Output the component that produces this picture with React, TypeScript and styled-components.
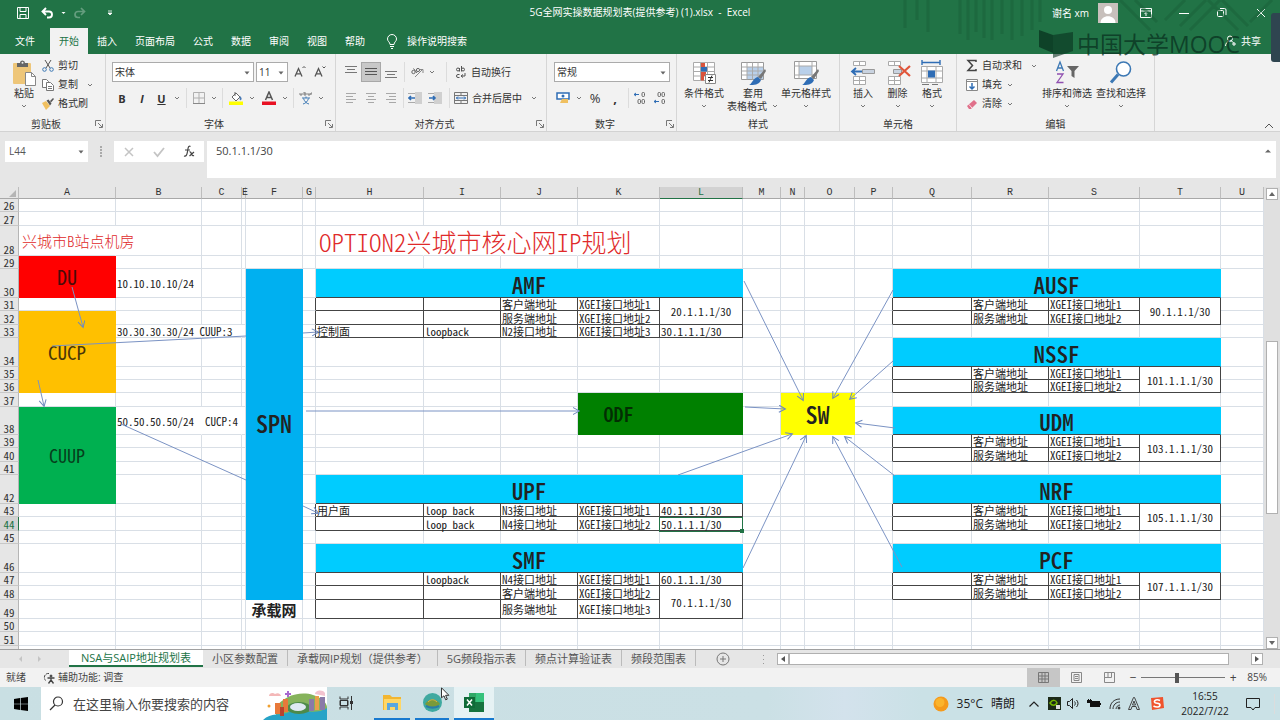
import React from "react";
import styled, { createGlobalStyle, css } from "styled-components";

const GREEN = "#217346";
const UI_FONT = '"Open Sans", "Noto Sans CJK SC", sans-serif';
const CELL_FONT = '"Noto Sans CJK SC", sans-serif';

const Global = createGlobalStyle`
  * { box-sizing: border-box; }
  body { margin: 0; font-family: ${UI_FONT}; font-size: 10px; line-height: 13px; color: #333; }
  button, input, select { font: inherit; color: inherit; margin: 0; padding: 0; border: 0; background: none; border-radius: 0; }
  svg { display: block; flex: none; }
`;

const Shell = styled.div`
  display: flex;
  flex-direction: column;
  height: 100vh;
  min-width: 1180px;
  overflow: hidden;
  position: relative;
`;

/* ---------- title bar and tabs ---------- */

const TitleBar = styled.header`
  display: grid;
  grid-template-columns: 1fr auto 1fr;
  align-items: start;
  height: 28px;
  flex: none;
  background: ${GREEN};
  color: #fff;
  position: relative;
`;
const Side = styled.div<{ $end?: boolean }>`
  display: flex;
  align-items: center;
  height: 26px;
  justify-content: ${(p) => (p.$end ? "flex-end" : "flex-start")};
  padding-left: ${(p) => (p.$end ? 0 : 12)}px;
`;
const DocTitle = styled.h1`
  margin: 0;
  font-size: 10px;
  font-weight: 400;
  line-height: 24px;
`;
const BarButton = styled.button<{ $w: number; $dim?: boolean }>`
  display: flex;
  align-items: center;
  justify-content: center;
  width: ${(p) => p.$w}px;
  height: 24px;
  opacity: ${(p) => (p.$dim ? 0.3 : 1)};
`;
const Account = styled.button`
  display: flex;
  align-items: center;
  gap: 9px;
  margin-right: 9px;
`;
const Stripes = styled.svg`
  position: absolute;
  right: 0;
  top: 0;
`;
const TabBar = styled.nav`
  display: flex;
  height: 26px;
  flex: none;
  background: ${GREEN};
  color: #fff;
`;
const Tab = styled.button<{ $on?: boolean; $first?: boolean }>`
  padding: 0 9px;
  min-width: ${(p) => (p.$first ? 50 : 38)}px;
  ${(p) => p.$on && css`background: #f2f2f2; color: ${GREEN};`}
`;
const Tell = styled.button`
  display: flex;
  align-items: center;
  gap: 9px;
  margin-left: 12px;
`;
const Share = styled.button`
  display: flex;
  align-items: center;
  gap: 4px;
  margin-left: auto;
  margin-right: 19px;
`;
const Watermark = styled.div`
  position: absolute;
  right: 40px;
  top: 30px;
  display: flex;
  align-items: center;
  gap: 2px;
  font-size: 23px;
  line-height: 28px;
  color: rgba(8, 48, 30, 0.74);
  pointer-events: none;
`;
const EdgeHandle = styled.div`
  position: absolute;
  right: 0;
  top: 13px;
  width: 9px;
  height: 49px;
  background: #2f4550;
  border-radius: 3px 0 0 3px;
`;

/* ---------- ribbon ---------- */

const Ribbon = styled.section`
  display: flex;
  height: 78px;
  flex: none;
  background: #f2f2f2;
  border-bottom: 1px solid #d2d2d2;
`;
const GroupBox = styled.div<{ $w: number }>`
  display: flex;
  flex-direction: column;
  width: ${(p) => p.$w}px;
  flex: none;
  border-right: 1px solid #d6d6d6;
`;
const GroupBody = styled.div<{ $pad: number }>`
  display: flex;
  flex: 1;
  padding-left: ${(p) => p.$pad}px;
`;
const GroupFoot = styled.div`
  display: flex;
  align-items: center;
  height: 14px;
  span { flex: 1; text-align: center; }
`;
const Launch = styled.button`
  width: 13px;
  height: 13px;
  display: grid;
  place-items: center;
`;
const BigButton = styled.button<{ $w: number }>`
  display: flex;
  flex-direction: column;
  align-items: center;
  width: ${(p) => p.$w}px;
  padding-top: 6px;
  white-space: nowrap;
  svg:first-child { margin-bottom: 1px; }
`;
const BigNote = styled.span`
  display: flex;
  align-items: center;
  gap: 4px;
  height: 12px;
`;
const Stack = styled.div<{ $w?: number }>`
  display: flex;
  flex-direction: column;
  padding-top: 2px;
  width: ${(p) => (p.$w ? p.$w + "px" : "auto")};
`;
const RowButton = styled.button<{ $h?: number; $far?: boolean }>`
  display: flex;
  align-items: center;
  height: ${(p) => p.$h || 19}px;
  gap: 4px;
  white-space: nowrap;
  svg + span + svg { margin-left: ${(p) => (p.$far ? 4 : 0)}px; }
`;
const Lines = styled.div`
  display: flex;
  flex-direction: column;
  gap: 6px;
  padding-top: 8px;
`;
const Line = styled.div<{ $gap?: number }>`
  display: flex;
  align-items: center;
  height: 20px;
  gap: ${(p) => p.$gap || 0}px;
`;
const Tool = styled.button<{ $w?: number; $on?: boolean; $dim?: boolean; $large?: boolean }>`
  display: grid;
  place-items: center;
  width: ${(p) => p.$w || 20}px;
  height: 20px;
  font-size: ${(p) => (p.$large ? 13 : 11)}px;
  opacity: ${(p) => (p.$dim ? 0.6 : 1)};
  ${(p) => p.$on && css`background: #c8c8c8; box-shadow: inset 0 0 0 1px #a8a8a8;`}
`;
const Sep = styled.i<{ $w: number }>`
  width: ${(p) => p.$w}px;
  height: 20px;
  display: grid;
  justify-content: center;
  &::before { content: ""; width: 1px; background: #dcdcdc; }
`;
const Pick = styled.label<{ $w: number }>`
  position: relative;
  width: ${(p) => p.$w}px;
  height: 20px;
  background: #fff;
  border: 1px solid #ababab;
  select { width: 100%; height: 18px; padding-left: 2px; appearance: none; outline: none; }
  svg { position: absolute; right: 2px; top: 7px; pointer-events: none; }
`;
const Collapse = styled.button`
  margin: auto 6px 2px auto;
`;

/* ---------- formula bar ---------- */

const FormulaBar = styled.div`
  display: flex;
  height: 55px;
  flex: none;
  padding: 9px 4px 9px 5px;
  background: #e6e6e6;
`;
const NameBox = styled.label`
  display: flex;
  align-items: center;
  width: 83px;
  height: 21px;
  padding: 0 4px;
  background: #fff;
  input { width: 68px; outline: none; color: #555; }
`;
const Grip = styled.span<{ $h: number }>`
  display: grid;
  place-items: center;
  width: 26px;
  height: ${(p) => p.$h}px;
`;
const FxBox = styled.div`
  display: flex;
  align-items: center;
  justify-content: space-around;
  width: 90px;
  height: 21px;
  background: #fff;
`;
const FormulaField = styled.div`
  display: flex;
  flex: 1;
  align-items: flex-start;
  margin-left: 3px;
  height: 37px;
  background: #fff;
  padding: 0 4px 0 9px;
  input { flex: 1; height: 19px; font-size: 11px; outline: none; color: #444; }
  button { height: 19px; }
`;

/* ---------- sheet ---------- */

const SheetArea = styled.main`
  display: flex;
  flex: 1;
  min-height: 0;
  background: #fff;
`;
const Viewport = styled.div`
  position: relative;
  flex: 1;
  overflow: hidden;
`;
const Grid = styled.table`
  table-layout: fixed;
  width: 100%;
  min-width: 1264px;
  border-collapse: separate;
  border-spacing: 0;
  font-family: ${CELL_FONT};
  font-feature-settings: "hwid";
  font-size: 11px;
  line-height: 12px;
  color: #222;
`;
const GridRow = styled.tr<{ $h: number }>`
  height: ${(p) => p.$h}px;
`;
const ColHead = styled.th<{ $on?: boolean }>`
  padding: 0;
  font-family: "Liberation Mono", monospace;
  font-size: 10px;
  font-weight: 400;
  line-height: 11px;
  background: ${(p) => (p.$on ? "#d2d2d2" : "#e6e6e6")};
  color: ${(p) => (p.$on ? GREEN : "#333")};
  border-right: 1px solid #bdbdbd;
  border-bottom: 1px solid ${(p) => (p.$on ? GREEN : "#a8a8a8")};
`;
const RowHead = styled.th<{ $on?: boolean }>`
  padding: 0;
  font-weight: 400;
  vertical-align: bottom;
  background: ${(p) => (p.$on ? "#d2d2d2" : "#e6e6e6")};
  color: ${(p) => (p.$on ? GREEN : "#333")};
  border-right: 1px solid ${(p) => (p.$on ? GREEN : "#b5b5b5")};
  border-bottom: 1px solid #c8c8c8;
`;
type CellStyle = {
  $bg?: string;
  $size?: number;
  $weight?: number;
  $center?: boolean;
  $color?: string;
  $right: string;
  $bottom: string;
  $valign?: string;
  $up?: boolean;
};
const Cell = styled.td<CellStyle>`
  padding: 0 1px ${(p) => (p.$up ? 22 : 0)}px ${(p) => (p.$size && !p.$center ? 3 : 1)}px;
  white-space: pre;
  vertical-align: ${(p) => p.$valign || "middle"};
  text-align: ${(p) => (p.$center ? "center" : "left")};
  background: ${(p) => p.$bg || "transparent"};
  color: ${(p) => p.$color || "inherit"};
  font-weight: ${(p) => p.$weight || 400};
  border-right: 1px solid ${(p) => p.$right};
  border-bottom: 1px solid ${(p) => p.$bottom};
  ${(p) => p.$size && css`font-size: ${p.$size}px; line-height: ${p.$size + 2}px;`}
`;
const Selected = styled.div`
  position: relative;
  &::before { content: ""; position: absolute; inset: -1px -2px -2px -2px; border: 1px solid ${GREEN}; }
  &::after { content: ""; position: absolute; right: -3px; bottom: -3px; width: 4px; height: 4px; background: ${GREEN}; }
`;
const Arrows = styled.svg`
  position: absolute;
  left: 0;
  top: 0;
  pointer-events: none;
`;
const VScroll = styled.div`
  display: flex;
  flex-direction: column;
  width: 16px;
  padding: 1px 2px 0;
  background: #e0e0e0;
`;
const ScrollButton = styled.button`
  display: grid;
  place-items: center;
  width: 12px;
  height: 12px;
  flex: none;
  background: #fff;
  border: 1px solid #b0b0b0;
`;
const VTrack = styled.div`
  display: grid;
  grid-template-rows: 141fr 173fr 123fr;
  flex: 1;
`;
const Thumb = styled.div`
  grid-row: 2;
  background: #fff;
  border: 1px solid #b0b0b0;
`;

const SheetTabs = styled.nav`
  display: flex;
  align-items: flex-start;
  height: 19px;
  flex: none;
  background: #e6e6e6;
  border-top: 1px solid #a0a0a0;
  font-size: 11px;
  color: #555;
`;
const TabNav = styled.div`
  display: flex;
  align-items: center;
  justify-content: center;
  gap: 14px;
  width: 69px;
  height: 18px;
  padding-right: 10px;
`;
const SheetTab = styled.button<{ $on?: boolean }>`
  height: 16px;
  padding: 0 9px;
  line-height: 15px;
  white-space: nowrap;
  border-right: 1px solid #bbb;
  ${(p) => p.$on && css`min-width: 134px; height: 17px; background: #fff; color: ${GREEN}; border-right: 0; border-bottom: 2px solid ${GREEN};`}
`;
const AddTab = styled.button`
  margin: 2px 0 0 20px;
`;
const HScroll = styled.div`
  display: flex;
  align-items: center;
  width: 40%;
  height: 18px;
  margin-left: auto;
  margin-right: 17px;
`;
const HThumb = styled.div`
  flex: 1;
  height: 12px;
  background: #fff;
  border: 1px solid #b0b0b0;
  margin-right: 22px;
`;

/* ---------- status bar ---------- */

const StatusBar = styled.footer`
  display: flex;
  align-items: center;
  height: 19px;
  flex: none;
  padding: 0 13px 0 6px;
  background: #f2f2f2;
  color: #444;
`;
const Access = styled.button`
  display: flex;
  align-items: center;
  gap: 2px;
  margin-left: 17px;
`;
const ViewTool = styled.button<{ $on?: boolean }>`
  display: grid;
  place-items: center;
  width: 33px;
  height: 19px;
  background: ${(p) => (p.$on ? "#c6c6c6" : "transparent")};
`;
const Zoom = styled.div`
  display: flex;
  align-items: center;
  gap: 3px;
  margin-left: 2px;
  button { width: 10px; font-size: 12px; }
  span { margin-left: 6px; }
`;
const ZoomSlider = styled.input`
  width: 84px;
  height: 12px;
  appearance: none;
  background: linear-gradient(#777, #777) center / 100% 1px no-repeat;
  &::-webkit-slider-thumb { appearance: none; width: 4px; height: 10px; background: #555; }
`;

/* ---------- task bar ---------- */

const TaskBar = styled.footer`
  display: flex;
  align-items: stretch;
  height: 33px;
  flex: none;
  background: linear-gradient(90deg, #c9dfe3, #cbe0e5 60%, #d3e2ec 66%, #cae1e6 72%);
  color: #222;
`;
const StartButton = styled.button`
  display: grid;
  place-items: center;
  width: 41px;
`;
const Search = styled.label`
  display: flex;
  align-items: center;
  width: 286px;
  background: #fff;
  padding-left: 8px;
  input { width: 196px; margin-left: 9px; margin-right: 8px; font-size: 13px; outline: none; }
  input::placeholder { color: #444; opacity: 1; }
`;
const TaskButton = styled.button<{ $w: number; $open?: boolean; $on?: boolean }>`
  display: grid;
  place-items: center;
  width: ${(p) => p.$w}px;
  margin-right: ${(p) => (p.$open ? 5 : 9)}px;
  background: ${(p) => (p.$on ? "#e6f2f4" : "transparent")};
  border-bottom: 2px solid ${(p) => (p.$open ? "#1779cf" : "transparent")};
`;
const Tray = styled.div`
  display: flex;
  align-items: center;
  margin-left: auto;
`;
const Weather = styled.button`
  display: flex;
  align-items: center;
  gap: 8px;
  font-size: 12px;
  margin-right: 9px;
`;
const TrayButton = styled.button<{ $w?: number }>`
  display: grid;
  place-items: center;
  width: ${(p) => p.$w || 20}px;
  height: 30px;
`;
const Clock = styled.button`
  width: 64px;
  margin-left: 2px;
  line-height: 15px;
`;
const Pointer = styled.svg`
  position: absolute;
  left: 441px;
  bottom: 19px;
`;

/* ---------- icons ---------- */

const Caret = () => (
  <svg width="8" height="6" viewBox="0 0 8 6"><path d="M2 2l2 2 2-2" fill="none" stroke="#777" /></svg>
);
const CaretFill = () => (
  <svg width="8" height="6" viewBox="0 0 8 6"><path d="M1.500 1.500h5L4 4.500z" fill="#666" /></svg>
);
const IconLaunch = () => (
  <svg width="8" height="8" viewBox="0 0 8 8" fill="none" stroke="#777"><path d="M.5 6V.5H6M3 3l4 4M7.500 4v3.500H4" /></svg>
);
const IconPaste = () => (
  <svg width="26" height="26" viewBox="0 0 26 26">
    <rect x="2" y="3" width="18" height="21" rx="1" fill="#eec679" />
    <path d="M6 7V3h3a2.500 2.500 0 0 1 5 0h3v4z" fill="#666" /><circle cx="11.500" cy="2.800" r="1" fill="#f2f2f2" />
    <path d="M14.500 12.500h6l4 4v9h-10z" fill="#fff" stroke="#888" /><path d="M20.500 12.500v4h4" fill="none" stroke="#888" />
  </svg>
);
const IconCut = () => (
  <svg width="12" height="12" viewBox="0 0 12 12" fill="none"><path d="M3 0l5 8M9 0L4 8" stroke="#555" /><circle cx="2.500" cy="9.500" r="1.800" stroke="#3c78b4" /><circle cx="9.500" cy="9.500" r="1.800" stroke="#3c78b4" /></svg>
);
const IconCopy = () => (
  <svg width="12" height="12" viewBox="0 0 12 12" fill="#fff" stroke="#777"><path d="M.5.5h4l2 2v6h-6z" /><path d="M4.500 3.500h4l3 3v5h-7zM6 7.500h4M6 9.500h4" /></svg>
);
const IconBrush = () => (
  <svg width="12" height="12" viewBox="0 0 12 12"><path d="M0 5l4-2 4 5-4 4z" fill="#f0c060" /><path d="M4.500 2.500l2-1 3 4-1.500 2z" fill="#555" /><path d="M8 3l3-3 1 1-3 3.500z" fill="#555" /></svg>
);
const GrowA = ({ down }: { down?: boolean }) => (
  <svg width="14" height="14" viewBox="0 0 14 14" fill="none" stroke="#555" strokeWidth="1.300"><path d="M2 11.500L5.500 3.500 9 11.500M3.300 8.800h4.400" /><path d={down ? "M9.500 1.500L11 3l1.500-1.500" : "M9.500 3L11 1.500 12.500 3"} strokeWidth="1" /></svg>
);
const IconBorders = () => (
  <svg width="12" height="12" viewBox="0 0 12 12" stroke="#b0b0b0" fill="none"><path d="M.5.5h11v11H.5zM6 .5v11M.5 6h11" /><path d="M0 11.500h12" stroke="#888" /></svg>
);
const IconBucket = () => (
  <svg width="14" height="14" viewBox="0 0 14 14"><path d="M3 6l4-4 4 4-4 4zM6 1v4" fill="#fff" stroke="#666" /><path d="M11 5c2 2 2 3 1 4s-2-1-1-4z" fill="#4a7ab5" /><path d="M0 10.500h14V14H0z" fill="#ff0" /></svg>
);
const IconFontColor = () => (
  <svg width="14" height="14" viewBox="0 0 14 14"><path d="M3.500 9L7 1l3.500 8M4.800 6.500h4.400" fill="none" stroke="#555" strokeWidth="1.500" /><path d="M0 10.500h14V14H0z" fill="#e81123" /></svg>
);
const IconWen = () => (
  <svg width="14" height="14" viewBox="0 0 14 14" fill="none"><path d="M1 2v2h2V2M5 1v3h2V2H5M9 2v2h2V2M12 4V2h1" stroke="#666" strokeWidth=".8" /><path d="M3 7h8M7 5.500V7M4.500 7.500c1 3 3 5 5.500 5.500M9.500 7.500c-1 3-3 5-5.500 5.500" stroke="#3c78b4" /></svg>
);
const Bars = ({ rows, dark }: { rows: [number, number, number][]; dark?: boolean }) => (
  <svg width="14" height="14" viewBox="0 0 14 14" stroke={dark ? "#555" : "#777"}>
    {rows.map(([y, a, b]) => <path key={y} d={`M${a} ${y}.5H${b}`} />)}
  </svg>
);
const IconOrient = () => (
  <svg width="14" height="14" viewBox="0 0 14 14" fill="none" stroke="#666"><circle cx="3.500" cy="7" r="1.700" /><path d="M3.500 3.500L7 8" /><circle cx="8" cy="5" r="1.600" /><path d="M5 12l7-7M9.500 4.500H13V8" stroke="#888" /></svg>
);
const IconIndent = ({ flip }: { flip?: boolean }) => (
  <svg width="14" height="12" viewBox="0 0 14 12"><path d={flip ? "M6 0h8v12H6z" : "M7 0h7v12H7z"} fill="#d0d0d0" /><path d={flip ? "M0 1.500h6M0 10.500h6" : "M0 1.500h7M0 10.500h7"} stroke="#aaa" /><path d={flip ? "M1 6h6M5 4l2 2-2 2" : "M7 6H1M3 4L1 6l2 2"} fill="none" stroke="#2f6db5" strokeWidth="1.600" /></svg>
);
const IconWrap = () => (
  <svg width="12" height="14" viewBox="0 0 12 14" fill="none" stroke="#555"><circle cx="3" cy="4.500" r="1.500" /><path d="M4.500 3v3.500M6.500 1v5.500" /><circle cx="8" cy="4.500" r="1.500" /><path d="M4.500 9.500H3a1.500 1.500 0 0 0 0 3h1.500M6 11h4V8M8 9.500L6 11l2 1.500" /></svg>
);
const IconMerge = () => (
  <svg width="14" height="12" viewBox="0 0 14 12" fill="none"><path d="M.5.5h13v11H.5zM7 .5v3M7 8.500v3M.5 3.500h13M.5 8.500h13" stroke="#777" /><path d="M2 6h10M4 4.500L2.500 6 4 7.500M10 4.500L11.500 6 10 7.500" stroke="#2f6db5" /></svg>
);
const IconMoney = () => (
  <svg width="14" height="12" viewBox="0 0 14 12"><path d="M1 1h12v6H1z" fill="#fff" stroke="#2f6db5" strokeWidth="1.500" /><circle cx="7" cy="4" r="1.500" fill="#2f6db5" /><path d="M6 7h6v4H4z" fill="#f0c060" /></svg>
);
const IconDecimal = ({ less }: { less?: boolean }) => (
  <svg width="14" height="14" viewBox="0 0 14 14" fill="none"><path d={less ? "M1 10.500h5M3 9l-2 1.500L3 12" : "M1 3.500h5M3 2L1 3.500 3 5"} stroke="#2f6db5" /><g stroke="#666"><rect x="9" y="1.500" width="2.500" height="4" rx="1" /><rect x="9" y="8.500" width="2.500" height="4" rx="1" />{less ? <rect x="5" y="1.500" width="2.500" height="4" rx="1" /> : <rect x="5" y="8.500" width="2.500" height="4" rx="1" />}</g></svg>
);
const IconCond = () => (
  <svg width="26" height="26" viewBox="0 0 26 26"><path d="M2.500 2.500h21v18h-21zM9.500 2.500v18M16.500 2.500v18M2.500 7h21M2.500 11.500h21M2.500 16h21" fill="#fff" stroke="#aaa" /><path d="M10 3h4v4h-4zM10 12h5v4h-5z" fill="#d9533c" /><path d="M10 7h6v4.500h-6z" fill="#2f6db5" /><path d="M10 16h3v4.500h-3z" fill="#d9533c" /><path d="M14.500 14.500h10v9h-10z" fill="#fff" stroke="#888" /><path d="M17 17.500h5M17 20.500h5M21 15.500l-3 7" stroke="#333" /></svg>
);
const IconTable = ({ big }: { big?: boolean }) => (
  <svg width="26" height="26" viewBox="0 0 26 26">
    <path d={big ? "M1.500 1.500h22v17h-22z" : "M1.500 2.500h22v17h-22z"} fill="#fff" stroke="#999" />
    <path d={big ? "M6 6h13v9H6z" : "M7 7h16v12H7z"} fill="#b9d0ea" />
    <path d={big ? "M6 1.500v17M19 1.500v17M1.500 6h22M1.500 15h22" : "M7 2.500v17M12.500 2.500v17M18 2.500v17M1.500 7h22M1.500 11h22M1.500 15h22"} fill="none" stroke="#aaa" />
    <path d="M25 9l-7 8 3 2 5-8z" fill="#777" /><path d="M18 17l3 3c-2 5-7 5-12 5 3-1 4-7 9-8z" fill="#2f6db5" />
  </svg>
);
const IconInsert = ({ remove }: { remove?: boolean }) => (
  <svg width="26" height="26" viewBox="0 0 26 26"><path d="M3.500 1.500h12v4h-12zM9.500 1.500v4M3.500 16.500h12v8h-12zM9.500 16.500v8M3.500 20.500h12" fill="#fff" stroke="#aaa" /><path d={remove ? "M8.500 9.500h8v4h-8z" : "M12.500 9.500h12v4h-12z"} fill="#c9d3e0" stroke="#999" />{remove ? <path d="M14 6l11 10M25 6L14 16" stroke="#e0553a" strokeWidth="2.200" /> : <path d="M12 11.500H2M6 8l-4 3.500L6 15" fill="none" stroke="#2f6db5" strokeWidth="1.800" />}</svg>
);
const IconFormat = () => (
  <svg width="26" height="26" viewBox="0 0 26 26"><path d="M3 2.500h18M3 0v5M21 0v5" stroke="#2f6db5" strokeWidth="1.400" /><path d="M2.500 6.500h21v16h-21zM8 6.500v16M17 6.500v16M2.500 11h21M2.500 18h21" fill="#fff" stroke="#aaa" /><path d="M9 10.500h7v7H9z" fill="#2f6db5" /><path d="M3 24.500h7M13 24.500h6" stroke="#777" /></svg>
);
const IconSigma = () => (<svg width="12" height="13" viewBox="0 0 12 13"><path d="M10 3V1.500H2L6.500 6.500 2 11.500h8V10" fill="none" stroke="#444" strokeWidth="1.500" /></svg>);
const IconFill = () => (<svg width="12" height="12" viewBox="0 0 12 12" fill="none"><path d="M.5.5h11v11H.5zM.5 2.500h11" stroke="#888" fill="#fff" /><path d="M6 4v6M3.500 7.500L6 10l2.500-2.500" stroke="#2f6db5" strokeWidth="1.500" /></svg>);
const IconErase = () => (<svg width="12" height="12" viewBox="0 0 12 12"><path d="M1 8l7-6 3 3-6 6H3z" fill="#e0708a" /><path d="M3 6.500L6 10" stroke="#fff" strokeWidth=".8" /></svg>);
const IconSort = () => (
  <svg width="26" height="26" viewBox="0 0 26 26" fill="none"><path d="M2.500 11L6 2l3.500 9M3.800 8h4.400" stroke="#3c78b4" strokeWidth="1.300" /><path d="M3 14h6l-6 8.500h6.500" stroke="#9050b0" strokeWidth="1.300" /><path d="M13 6h12l-4.500 5v7l-3-2v-5z" fill="#666" /></svg>
);
const IconFind = () => (<svg width="26" height="26" viewBox="0 0 26 26" fill="none"><circle cx="15.500" cy="9" r="7" fill="#fff" stroke="#3c78b4" strokeWidth="1.600" /><path d="M10 14.500l-7 8" stroke="#3c78b4" strokeWidth="3" /></svg>);

/* ---------- ribbon pieces ---------- */

const Group = ({ w, pad = 0, title, launch, children }: { w: number; pad?: number; title: string; launch?: boolean; children: React.ReactNode }) => (
  <GroupBox $w={w}>
    <GroupBody $pad={pad}>{children}</GroupBody>
    <GroupFoot><span>{title}</span>{launch && <Launch aria-label={title + "设置"}><IconLaunch /></Launch>}</GroupFoot>
  </GroupBox>
);
const Big = ({ w, icon, text, note }: { w: number; icon: React.ReactNode; text: string; note?: string }) => (
  <BigButton $w={w}>{icon}<span>{text}</span><BigNote>{note}<Caret /></BigNote></BigButton>
);
const DropTool = ({ w }: { w: number }) => <Tool $w={w} aria-label="更多"><Caret /></Tool>;

/* ---------- sheet data ---------- */

const COLS: [string, number][] = [
  ["A", 97], ["B", 86], ["C", 40], ["E", 4], ["F", 57], ["G", 13], ["H", 108], ["I", 77], ["J", 77], ["K", 82],
  ["L", 83], ["M", 38], ["N", 24], ["O", 50], ["P", 38], ["Q", 79], ["R", 77], ["S", 91], ["T", 81], ["U", 0],
];
const ROWS = [13, 14, 30, 13, 29, 13, 14, 13, 29, 13, 13, 14, 28, 13, 14, 13, 29, 13, 14, 13, 29, 13, 14, 19, 13, 14, 14];
const FIRST = 26;

type Item = {
  text: string; cols?: number; rows?: number; bg?: string; size?: number; weight?: number; center?: boolean;
  color?: string; boxed?: boolean; open?: boolean; valign?: string; up?: boolean; selected?: boolean;
};
const items: Record<string, Item> = {
  A28: { text: "兴城市B站点机房", size: 15, weight: 300, color: "#e02a2a", open: true },
  A29: { text: "DU", rows: 2, bg: "#f00", size: 20, center: true, color: "#4a0a08" },
  A32: { text: "CUCP", rows: 5, bg: "#ffc000", size: 19, center: true, color: "#4a3608" },
  A38: { text: "CUUP", rows: 5, bg: "#00b050", size: 18, center: true, color: "#063f1c" },
  B30: { text: "10.10.10.10/24" },
  B33: { text: "30.30.30.30/24 CUUP:3", open: true },
  B38: { text: "50.50.50.50/24  CUCP:4", open: true },
  C33: { text: "", open: true },
  C38: { text: "", open: true },
  F30: { text: "SPN", rows: 19, bg: "#00b0f0", size: 24, weight: 500, center: true, up: true },
  F49: { text: "承载网", size: 15, weight: 700, center: true },
  H28: { text: "OPTION2兴城市核心网IP规划", size: 25, weight: 300, color: "#e02a2a", open: true, valign: "bottom" },
  I28: { text: "", open: true },
  J28: { text: "", open: true },
  K37: { text: "ODF", rows: 2, bg: "#008000", size: 20, weight: 500, center: true, color: "#032d03" },
  L37: { text: "", rows: 2, bg: "#008000" },
  N37: { text: "SW", cols: 2, rows: 2, bg: "#ff0", size: 24, weight: 500, center: true },
};
const head = (key: string, text: string, cols: number) => {
  items[key] = { text, cols, bg: "#0cf", size: 23, weight: 500, center: true, valign: "bottom" };
};
const line = (row: number, from: string, texts: string[]) => {
  const start = COLS.findIndex((c) => c[0] === from);
  texts.forEach((text, i) => { items[COLS[start + i][0] + row] = { text, boxed: true }; });
};
const pair = (key: string, text: string) => { items[key] = { text, rows: 2, center: true, boxed: true }; };

head("H30", "AMF", 5);
line(31, "H", ["", "", "客户端地址", "XGEI接口地址1"]);
line(32, "H", ["", "", "服务端地址", "XGEI接口地址2"]);
line(33, "H", ["控制面", "loopback", "N2接口地址", "XGEI接口地址3", "30.1.1.1/30"]);
pair("L31", "20.1.1.1/30");
head("H42", "UPF", 5);
line(43, "H", ["用户面", "loop back", "N3接口地址", "XGEI接口地址1", "40.1.1.1/30"]);
line(44, "H", ["", "loop back", "N4接口地址", "XGEI接口地址2", "50.1.1.1/30"]);
items.L44.selected = true;
head("H46", "SMF", 5);
line(47, "H", ["", "loopback", "N4接口地址", "XGEI接口地址1", "60.1.1.1/30"]);
line(48, "H", ["", "", "客户端地址", "XGEI接口地址2"]);
line(49, "H", ["", "", "服务端地址", "XGEI接口地址3"]);
pair("L48", "70.1.1.1/30");
([[30, "AUSF", "90"], [34, "NSSF", "101"], [38, "UDM", "103"], [42, "NRF", "105"], [46, "PCF", "107"]] as [number, string, string][]).forEach(([r, name, ip]) => {
  head("Q" + r, name, 4);
  line(r + 1, "Q", ["", "客户端地址", "XGEI接口地址1"]);
  line(r + 2, "Q", ["", "服务端地址", "XGEI接口地址2"]);
  pair("T" + (r + 1), ip + ".1.1.1/30");
});

const owner: Record<string, string> = {};
Object.entries(items).forEach(([key, it]) => {
  const c = COLS.findIndex((x) => x[0] === key[0]);
  const r = Number(key.slice(1));
  for (let i = 0; i < (it.cols || 1); i++) for (let j = 0; j < (it.rows || 1); j++) owner[COLS[c + i][0] + (r + j)] = key;
});
const boxedAt = (c: number, r: number) => {
  const o = COLS[c] && owner[COLS[c][0] + r];
  return !!o && !!items[o].boxed;
};

const LINE = "#d9dfe6";
const BOX = "#444";

const renderCell = (c: number, r: number) => {
  const key = COLS[c][0] + r;
  const own = owner[key];
  if (own && own !== key) return null;
  const it: Item = items[key] || { text: "" };
  const plain = it.bg || (it.open ? "transparent" : LINE);
  const below = r + (it.rows || 1);
  return (
    <Cell
      key={key} colSpan={it.cols || 1} rowSpan={it.rows || 1}
      $bg={it.bg} $size={it.size} $weight={it.weight} $center={it.center} $color={it.color} $valign={it.valign} $up={it.up}
      $right={it.boxed || boxedAt(c + (it.cols || 1), r) ? BOX : plain}
      $bottom={it.boxed || boxedAt(c, below) ? BOX : it.bg || LINE}
    >
      {it.selected ? <Selected>{it.text}</Selected> : it.text}
    </Cell>
  );
};

/* line ends, measured from the top left corner of the grid */
const ARROWS = [
  [72, 100, 83, 140], [303, 146, 318, 145], [38, 193, 44, 219], [303, 319, 318, 326], [306, 224, 579, 224],
  [745, 220, 785, 222], [744, 94, 803, 213], [893, 103, 833, 211], [893, 174, 850, 212], [895, 241, 856, 236],
  [895, 289, 845, 250], [902, 380, 833, 250], [678, 288, 792, 247], [743, 381, 806, 249],
];
const TAILS = [[52, 159, 246, 149], [121, 237, 246, 293]];

const TABS = ["文件", "开始", "插入", "页面布局", "公式", "数据", "审阅", "视图", "帮助"];
const SHEETS = ["NSA与SAIP地址规划表", "小区参数配置", "承载网IP规划（提供参考）", "5G频段指示表", "频点计算验证表", "频段范围表"];

export default function App() {
  return (
    <Shell>
      <Global />
      <TitleBar>
        <Stripes width="390" height="54" viewBox="0 0 390 54" fill="none" stroke="#1a6139" strokeWidth="3" opacity=".5" aria-hidden>
          <path d="M15 0v28M27 0v20M38 0v32M70 0v34M78 0v40M86 0v32M94 0v38M102 0v40M112 0v34M122 0v40M132 0v36M142 0v30M150 0v22M230 0l30 30M245 0l22 22M275 20l20-20M290 26L316 0M300 30L330 0M318 0l30 30M332 0l26 26M360 22l22-22" />
        </Stripes>
        <Side>
          <BarButton $w={22} aria-label="保存"><svg width="12" height="12" viewBox="0 0 12 12" fill="none" stroke="#fff"><path d="M.5.5h11v11H.5zM3 .5v4h6v-4M3 11.500V7.500h6v4" /></svg></BarButton>
          <BarButton $w={26} aria-label="撤消"><svg width="13" height="12" viewBox="0 0 13 12" fill="none" stroke="#fff" strokeWidth="1.900"><path d="M5 1L1.500 4.500 5 8M2 4.500h6a3 3 0 0 1 0 6H6" /></svg></BarButton>
          <svg width="8" height="6" viewBox="0 0 8 6"><path d="M1.500 2h4L3.500 4z" fill="#fff" /></svg>
          <BarButton $w={22} $dim aria-label="恢复"><svg width="13" height="12" viewBox="0 0 13 12" fill="none" stroke="#fff" strokeWidth="1.700"><path d="M8 1l3.500 3.500L8 8M11 4.500H5a3 3 0 0 0 0 6h2" /></svg></BarButton>
          <BarButton $w={40} aria-label="自定义快速访问工具栏"><svg width="6" height="6" viewBox="0 0 6 6"><path d="M1 1h4M1 3h4L3 5z" stroke="#fff" strokeWidth=".8" fill="#fff" /></svg></BarButton>
        </Side>
        <DocTitle>5G全网实操数据规划表(提供参考) (1).xlsx&nbsp; -&nbsp; Excel</DocTitle>
        <Side $end>
          <Account>谢名 xm<svg width="20" height="20" viewBox="0 0 20 20"><path d="M0 0h20v20H0z" fill="#c8c0bc" /><circle cx="10" cy="7" r="4" fill="#fff" /><path d="M2.500 20c0-9 15-9 15 0z" fill="#fff" /></svg></Account>
          <BarButton $w={38} aria-label="功能区显示选项"><svg width="12" height="10" viewBox="0 0 12 10" fill="none" stroke="#fff"><path d="M.5.5h11v9H.5zM.5 3h11M6 8V4.500M4.500 6L6 4.500 7.500 6" /></svg></BarButton>
          <BarButton $w={38} aria-label="最小化"><svg width="10" height="10" viewBox="0 0 10 10" stroke="#fff"><path d="M0 5.500h10" /></svg></BarButton>
          <BarButton $w={38} aria-label="还原"><svg width="10" height="10" viewBox="0 0 10 10" fill="none" stroke="#fff"><rect x=".5" y="2.500" width="6" height="6" rx="1" /><path d="M3 .5h4.500a1.500 1.500 0 0 1 1.500 1.500V7" /></svg></BarButton>
          <BarButton $w={39} aria-label="关闭"><svg width="10" height="10" viewBox="0 0 10 10" stroke="#fff"><path d="M1 1l8 8M9 1L1 9" /></svg></BarButton>
        </Side>
      </TitleBar>
      <TabBar>
        {TABS.map((t, i) => <Tab key={t} $first={i === 0} $on={i === 1}>{t}</Tab>)}
        <Tell><svg width="12" height="15" viewBox="0 0 12 15" fill="none" stroke="#fff"><path d="M4 10.500C4 8 1.500 7.500 1.500 5a4.500 4.500 0 0 1 9 0C10.500 7.500 8 8 8 10.500zM4 12.500h4M5 14.500h2" /></svg>操作说明搜索</Tell>
        <Share><svg width="12" height="12" viewBox="0 0 12 12" fill="none" stroke="#fff"><circle cx="5" cy="3.500" r="2.500" /><path d="M.5 11c.5-6 7-6 8-3M9 7v4M7 9h4" /></svg>共享</Share>
      </TabBar>

      <Ribbon>
        <Group w={106} pad={6} title="剪贴板" launch>
          <Big w={36} icon={<IconPaste />} text="粘贴" />
          <Stack>
            <RowButton><IconCut /><span>剪切</span></RowButton>
            <RowButton $far><IconCopy /><span>复制</span><Caret /></RowButton>
            <RowButton><IconBrush /><span>格式刷</span></RowButton>
          </Stack>
        </Group>
        <Group w={230} pad={6} title="字体" launch>
          <Lines>
            <Line $gap={2}>
              <Pick $w={142}><select aria-label="字体"><option>宋体</option></select><CaretFill /></Pick>
              <Pick $w={32}><select aria-label="字号"><option>11</option></select><CaretFill /></Pick>
              <Line><Tool aria-label="增大字号"><GrowA /></Tool><Tool aria-label="减小字号"><GrowA down /></Tool></Line>
            </Line>
            <Line>
              <Tool><b>B</b></Tool><Tool><b><i>I</i></b></Tool><Tool $w={19}><b><u>U</u></b></Tool><DropTool w={12} /><Sep $w={6} />
              <Tool aria-label="边框"><IconBorders /></Tool><DropTool w={10} /><Sep $w={7} />
              <Tool aria-label="填充颜色"><IconBucket /></Tool><DropTool w={12} /><Tool $w={22} aria-label="字体颜色"><IconFontColor /></Tool><DropTool w={10} /><Sep $w={6} />
              <Tool aria-label="拼音"><IconWen /></Tool><DropTool w={10} />
            </Line>
          </Lines>
        </Group>
        <Group w={211} pad={5} title="对齐方式" launch>
          <Lines>
            <Line>
              <Tool aria-label="顶端对齐"><Bars rows={[[1, 1, 13], [4, 3, 11], [7, 1, 13]]} /></Tool>
              <Tool $on aria-label="垂直居中"><Bars dark rows={[[3, 1, 13], [6, 1, 13], [9, 1, 13]]} /></Tool>
              <Tool aria-label="底端对齐"><Bars rows={[[6, 1, 13], [9, 3, 11], [12, 1, 13]]} /></Tool>
              <Sep $w={6} /><Tool aria-label="方向"><IconOrient /></Tool><DropTool w={10} /><Sep $w={18} />
              <RowButton $h={20}><IconWrap /><span>自动换行</span></RowButton>
            </Line>
            <Line>
              <Tool $dim aria-label="左对齐"><Bars rows={[[2, 2, 12], [5, 2, 9], [8, 2, 12], [11, 2, 9]]} /></Tool>
              <Tool $dim aria-label="居中"><Bars rows={[[2, 2, 12], [5, 4, 10], [8, 2, 12], [11, 4, 10]]} /></Tool>
              <Tool $dim aria-label="右对齐"><Bars rows={[[2, 2, 12], [5, 5, 12], [8, 2, 12], [11, 5, 12]]} /></Tool>
              <Sep $w={4} /><Tool aria-label="减少缩进"><IconIndent /></Tool><Tool aria-label="增加缩进"><IconIndent flip /></Tool><Sep $w={9} />
              <RowButton $h={20} $far><IconMerge /><span>合并后居中</span><Caret /></RowButton>
            </Line>
          </Lines>
        </Group>
        <Group w={130} pad={7} title="数字" launch>
          <Lines>
            <Line><Pick $w={116}><select aria-label="数字格式"><option>常规</option></select><CaretFill /></Pick></Line>
            <Line>
              <Tool $w={18} aria-label="会计数字格式"><IconMoney /></Tool><DropTool w={14} /><Tool $w={18} $large>%</Tool><Tool $w={22} $large><b>,</b></Tool><Sep $w={4} />
              <Tool aria-label="增加小数位数"><IconDecimal /></Tool><Tool aria-label="减少小数位数"><IconDecimal less /></Tool>
            </Line>
          </Lines>
        </Group>
        <Group w={163} title="样式">
          <Big w={54} icon={<IconCond />} text="条件格式" />
          <Big w={44} icon={<IconTable />} text="套用" note="表格格式" />
          <Big w={62} icon={<IconTable big />} text="单元格样式" />
        </Group>
        <Group w={117} pad={6} title="单元格">
          <Big w={34} icon={<IconInsert />} text="插入" />
          <Big w={35} icon={<IconInsert remove />} text="删除" />
          <Big w={34} icon={<IconFormat />} text="格式" />
        </Group>
        <Group w={198} pad={9} title="编辑">
          <Stack $w={74}>
            <RowButton $far><IconSigma /><span>自动求和</span><Caret /></RowButton>
            <RowButton><IconFill /><span>填充</span><Caret /></RowButton>
            <RowButton><IconErase /><span>清除</span><Caret /></RowButton>
          </Stack>
          <Big w={54} icon={<IconSort />} text="排序和筛选" />
          <Big w={54} icon={<IconFind />} text="查找和选择" />
        </Group>
        <Collapse aria-label="折叠功能区"><svg width="10" height="6" viewBox="0 0 10 6" fill="none" stroke="#555"><path d="M1 5l4-4 4 4" /></svg></Collapse>
      </Ribbon>

      <FormulaBar>
        <NameBox><input aria-label="名称框" defaultValue="L44" /><CaretFill /></NameBox>
        <Grip $h={21}><svg width="2" height="12" viewBox="0 0 2 12" fill="#aaa"><path d="M0 0h2v2H0zM0 3h2v2H0zM0 6h2v2H0zM0 9h2v2H0z" /></svg></Grip>
        <FxBox>
          <button aria-label="取消"><svg width="12" height="12" viewBox="0 0 12 12" stroke="#c4c4c4" strokeWidth="1.500"><path d="M2 2l8 8M10 2l-8 8" /></svg></button>
          <button aria-label="输入"><svg width="12" height="12" viewBox="0 0 12 12" fill="none" stroke="#c4c4c4" strokeWidth="1.800"><path d="M1 6l3.500 4L11 2" /></svg></button>
          <button aria-label="插入函数"><svg width="12" height="13" viewBox="0 0 12 13" fill="none" stroke="#444" strokeWidth="1.200"><path d="M7.500 1.500C5 0 5 4 4.500 6.500S3.500 12 1 11M2 5h5M6.500 7c2-1 2 5 4.500 3.500M11 7l-4.500 4" /></svg></button>
        </FxBox>
        <FormulaField>
          <input aria-label="编辑栏" defaultValue="50.1.1.1/30" />
          <button aria-label="折叠编辑栏"><svg width="8" height="6" viewBox="0 0 8 6"><path d="M1 4.500h6L4 1.500z" fill="#666" /></svg></button>
        </FormulaField>
      </FormulaBar>

      <SheetArea>
        <Viewport>
          <Grid>
            <colgroup>
              <col width={19} />
              {COLS.map(([n, w]) => <col key={n} width={w || undefined} />)}
            </colgroup>
            <thead>
              <GridRow $h={12}>
                <ColHead aria-label="全选"><svg width="17" height="10" viewBox="0 0 17 10"><path d="M16 2v7H9z" fill="#b5b5b5" /></svg></ColHead>
                {COLS.map(([n]) => <ColHead key={n} $on={n === "L"}>{n}</ColHead>)}
              </GridRow>
            </thead>
            <tbody>
              {ROWS.map((h, i) => (
                <GridRow key={i} $h={h}>
                  <RowHead $on={i + FIRST === 44}>{i + FIRST}</RowHead>
                  {COLS.map((_, c) => renderCell(c, i + FIRST))}
                </GridRow>
              ))}
            </tbody>
          </Grid>
          <Arrows width="1264" height="462" fill="none" stroke="#7b93c4" aria-hidden>
            <defs>
              <marker id="tip" markerWidth="9" markerHeight="9" refX="7" refY="4" orient="auto" markerUnits="userSpaceOnUse"><path d="M1 .5L7.500 4 1 7.500" stroke="#6d88bd" fill="none" /></marker>
            </defs>
            {TAILS.map(([x1, y1, x2, y2], i) => <line key={i} x1={x1} y1={y1} x2={x2} y2={y2} />)}
            {ARROWS.map(([x1, y1, x2, y2], i) => <line key={i} x1={x1} y1={y1} x2={x2} y2={y2} markerEnd="url(#tip)" />)}
          </Arrows>
        </Viewport>
        <VScroll>
          <ScrollButton aria-label="向上滚动"><svg width="6" height="4" viewBox="0 0 6 4"><path d="M0 4h6L3 0z" fill="#666" /></svg></ScrollButton>
          <VTrack><Thumb /></VTrack>
          <ScrollButton aria-label="向下滚动"><svg width="6" height="4" viewBox="0 0 6 4"><path d="M0 0h6L3 4z" fill="#666" /></svg></ScrollButton>
        </VScroll>
      </SheetArea>

      <SheetTabs>
        <TabNav><svg width="5" height="8" viewBox="0 0 5 8"><path d="M4 1v6L1 4z" fill="#c4c4c4" /></svg><svg width="5" height="8" viewBox="0 0 5 8"><path d="M1 1v6l3-3z" fill="#c4c4c4" /></svg></TabNav>
        {SHEETS.map((s, i) => <SheetTab key={s} $on={i === 0}>{s}</SheetTab>)}
        <AddTab aria-label="新工作表"><svg width="14" height="14" viewBox="0 0 14 14" fill="none" stroke="#777"><circle cx="7" cy="7" r="6" /><path d="M7 4v6M4 7h6" /></svg></AddTab>
        <HScroll>
          <Grip $h={18}><svg width="2" height="9" viewBox="0 0 2 9" fill="#999"><path d="M0 0h1v1H0zM0 4h1v1H0zM0 8h1v1H0z" /></svg></Grip>
          <ScrollButton aria-label="向左滚动"><svg width="4" height="6" viewBox="0 0 4 6"><path d="M4 0v6L0 3z" fill="#555" /></svg></ScrollButton>
          <HThumb />
          <ScrollButton aria-label="向右滚动"><svg width="4" height="6" viewBox="0 0 4 6"><path d="M0 0v6l4-3z" fill="#555" /></svg></ScrollButton>
        </HScroll>
      </SheetTabs>

      <StatusBar>
        <span>就绪</span>
        <Access><svg width="13" height="12" viewBox="0 0 13 12" fill="none" stroke="#444"><path d="M6 1.500C2 1 0 5 2.500 8.500" strokeDasharray="3 1" /><circle cx="8" cy="4" r="1" fill="#444" /><path d="M4.500 6h7M8 6v2M8 8l-2.500 3.500M8 8l2.500 3.500" strokeWidth="1.300" /></svg>辅助功能: 调查</Access>
        <Tray>
          <ViewTool $on aria-label="普通"><svg width="11" height="11" viewBox="0 0 11 11" fill="none" stroke="#777"><path d="M.5.5h10v10H.5zM4 .5v10M7 .5v10M.5 4h10M.5 7h10" /></svg></ViewTool>
          <ViewTool aria-label="页面布局"><svg width="11" height="11" viewBox="0 0 11 11" fill="none" stroke="#888"><path d="M.5.5h10v10H.5zM3 2.500h5v6H3zM4 4.500h3M4 6.500h3" /></svg></ViewTool>
          <ViewTool aria-label="分页预览"><svg width="11" height="11" viewBox="0 0 11 11" fill="none" stroke="#888"><path d="M.5.5h10v10H.5zM4 .5v5M7.500 .5v5M.5 5.500h7" /></svg></ViewTool>
          <Zoom>
            <button>−</button>
            <ZoomSlider type="range" min={0} max={100} defaultValue={42} aria-label="缩放" />
            <button>+</button>
            <span>85%</span>
          </Zoom>
        </Tray>
      </StatusBar>

      <TaskBar>
        <StartButton aria-label="开始菜单"><svg width="14" height="14" viewBox="0 0 14 14"><path d="M0 2l6-1v5.700H0zM6.700 1L14 0v6.700H6.700zM0 7.300h6V13l-6-1zM6.700 7.300H14V14l-7.300-1z" /></svg></StartButton>
        <Search>
          <svg width="15" height="15" viewBox="0 0 15 15" fill="none" stroke="#333" strokeWidth="1.200"><circle cx="9" cy="5.500" r="4.500" /><path d="M6 9l-5 5" /></svg>
          <input aria-label="搜索" placeholder="在这里输入你要搜索的内容" />
          <svg width="64" height="33" viewBox="0 0 64 33">
            <path d="M12 22C20 8 38 4 50 8c8 2 14 8 14 12v13H14z" fill="#86b35c" />
            <path d="M0 33c8-8 18-4 26-8 12-4 26 4 38-4v12z" fill="#27a3c7" />
            <ellipse cx="36" cy="21" rx="12" ry="6" fill="#4d8a4a" /><ellipse cx="35" cy="20" rx="8" ry="4" fill="#dfe9f2" />
            <path d="M12 16h6v11h-6zM20 12h5v13h-5z" fill="#e8793a" /><path d="M17 20h4v9h-4z" fill="#b8432e" /><path d="M46 12h5v12h-5zM57 10h5v13h-5z" fill="#8a7aa8" /><path d="M52 9h4v14h-4z" fill="#e8a04a" />
            <path d="M6 9c0-3 4-4 6-2 3-2 6 0 6 2z" fill="#f4b8b8" /><path d="M25 4v6M22 7h6" stroke="#a86ad0" strokeWidth="2" /><path d="M52 7c0-4 8-5 10-1v3z" fill="#f2c3cf" /><circle cx="6" cy="19" r="1.500" fill="#f0a030" />
          </svg>
        </Search>
        <TaskButton $w={38} aria-label="任务视图"><svg width="15" height="14" viewBox="0 0 15 14" fill="none" stroke="#333"><path d="M1 .5V3h8V.5M1 13.500V11h8v2.500M1.500 4v6M8.500 4v6M1 4.500h8v5H1zM12.500 0v14" /><path d="M11 5h3v3h-3z" fill="#333" stroke="none" /></svg></TaskButton>
        <TaskButton $w={36} $open aria-label="文件资源管理器"><svg width="19" height="17" viewBox="0 0 19 17"><path d="M0 1h7l2 2h9v13H0z" fill="#f2b632" /><path d="M1 5h17v11H1z" fill="#ffd766" /><path d="M4 16V9h11v7h-3v-3H7v3z" fill="#5aa7e0" /></svg></TaskButton>
        <TaskButton $w={34} $open aria-label="浏览器"><svg width="19" height="19" viewBox="0 0 19 19"><circle cx="9.500" cy="9.500" r="9.500" fill="#3fa9a0" /><path d="M2 11c4-6 11-6 15 0-3 4-12 4-15 0z" fill="#7a9a3a" /><path d="M3 13c4 2 9 2 13 0" stroke="#2a7ca8" strokeWidth="2" fill="none" /><path d="M5 9c3-3 6-3 9 0" stroke="#e0b040" fill="none" /></svg></TaskButton>
        <TaskButton $w={40} $open $on aria-label="Excel"><svg width="20" height="19" viewBox="0 0 20 19"><path d="M5 0h15v19H5z" fill="#2fa866" /><path d="M12 0h8v9h-8z" fill="#35c27c" /><path d="M5 9h15v10H5z" fill="#16733f" /><path d="M0 4h11v11H0z" fill="#0f6b38" /><path d="M3 6.500l5 6M8 6.500l-5 6" stroke="#fff" strokeWidth="1.500" /></svg></TaskButton>
        <Tray>
          <Weather><svg width="16" height="16" viewBox="0 0 16 16"><circle cx="8" cy="8" r="7.500" fill="#f59a1b" /><circle cx="7" cy="6.500" r="4.500" fill="#fbb42c" /></svg><span>35°C</span><span>晴朗</span></Weather>
          <TrayButton aria-label="显示隐藏的图标"><svg width="10" height="6" viewBox="0 0 10 6" fill="none" stroke="#222" strokeWidth="1.200"><path d="M.5 5.500L5 1l4.500 4.500" /></svg></TrayButton>
          <TrayButton aria-label="显卡"><svg width="13" height="13" viewBox="0 0 13 13"><path d="M0 0h13v13H0z" fill="#1d2a18" /><path d="M2 6c3-4 6-3 7 0-2 3-5 3-7 0z" fill="none" stroke="#76b900" strokeWidth="1.500" /><path d="M8 8h4v4H8z" fill="#ddd" /></svg></TrayButton>
          <TrayButton $w={18} aria-label="音量"><svg width="12" height="11" viewBox="0 0 12 11" fill="none" stroke="#222"><path d="M.5 3.500h2l3-3v10l-3-3h-2zM7.500 3.500c1 1 1 3 0 4M9.500 2c2 2 2 5 0 7" /></svg></TrayButton>
          <TrayButton $w={23} aria-label="电池"><svg width="14" height="9" viewBox="0 0 14 9"><path d="M3 2h10v6H3zM13 4h1v2h-1zM0 1h5v3H0zM1 0h1v2H1zM3 0h1v2H3z" fill="#111" /></svg></TrayButton>
          <TrayButton aria-label="网络"><svg width="12" height="12" viewBox="0 0 12 12" fill="none" stroke="#333"><path d="M1 11C1 5 5 1 11 1M4 11c0-4 3-7 7-7M7 11c0-2 2-4 4-4" /><circle cx="10" cy="10" r="1" fill="#333" /></svg></TrayButton>
          <TrayButton $w={18} aria-label="输入指示"><svg width="12" height="13" viewBox="0 0 12 13" fill="none" stroke="#444"><path d="M.5 12.500L5.500 .5h1l5 12H9L8 9.500H4L3 12.500zM4.500 8h3L6 4z" /></svg></TrayButton>
          <TrayButton $w={28} aria-label="搜狗输入法"><svg width="14" height="13" viewBox="0 0 14 13"><path d="M1 1l12-1 1 11-12 2z" fill="#f0532d" /><path d="M10 3.500C7 2 4 3 4.500 5s5.500.5 5.500 3-4 2.500-6.500 1" fill="none" stroke="#fff" strokeWidth="1.600" /></svg></TrayButton>
          <Clock>16:55<br />2022/7/22</Clock>
          <TrayButton $w={32} aria-label="通知"><svg width="14" height="14" viewBox="0 0 14 14" fill="none" stroke="#222"><path d="M.5 1.500h13v9H9l-2 2.500-2-2.500H.5z" /></svg></TrayButton>
          <Sep $w={11} />
        </Tray>
      </TaskBar>

      <Watermark>
        <svg width="36" height="28" viewBox="0 0 36 28" fill="currentColor"><path d="M0 0l14 5v18L0 17z" /><path d="M14 5l20-3v19l-20 7z" opacity=".8" /></svg>
        <span>中国大学MOOC</span>
      </Watermark>
      <EdgeHandle />
      <Pointer width="9" height="14" viewBox="0 0 9 14" fill="#fff" stroke="#333"><path d="M.5.8v10l2.500-2 1.700 4 1.600-.7-1.700-3.800h3.300z" /></Pointer>
    </Shell>
  );
}
